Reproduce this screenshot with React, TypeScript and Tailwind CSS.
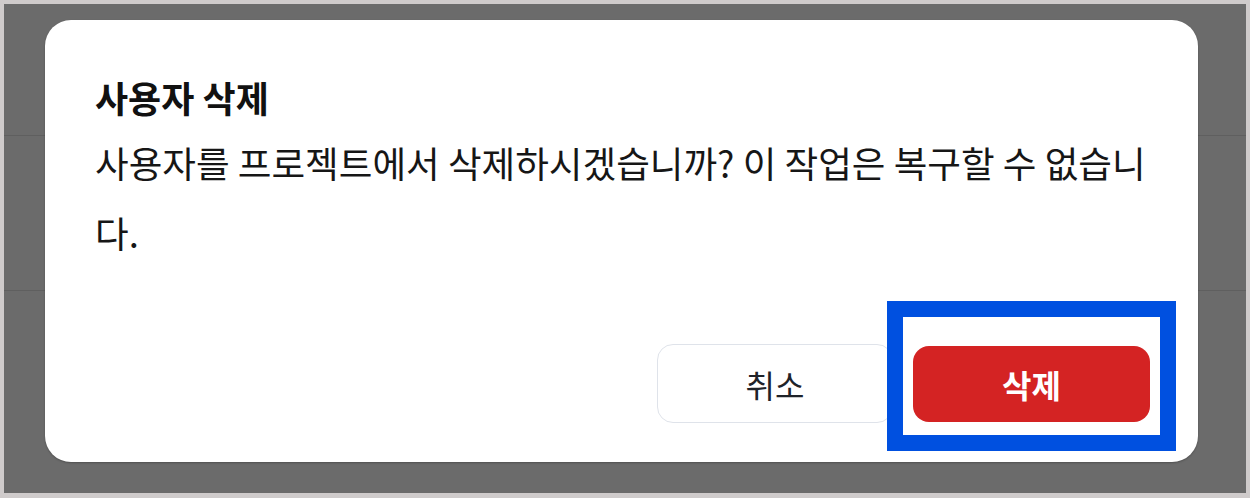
const font = { fontFamily: '"Noto Sans CJK KR", "Noto Sans", sans-serif' };

function BackgroundRows() {
  return (
    <div className="flex flex-col h-full">
      <div className="h-[132px] border-b border-[#5f5f5f]" />
      <div className="h-[155px] border-b border-[#5f5f5f]" />
      <div className="flex-1" />
    </div>
  );
}

export default function App() {
  return (
    <div className="w-[1250px] h-[498px] bg-[#cfcbcb] pt-[4px] pl-[4px] pr-[4px] pb-[5px]" style={font}>
      <div className="relative w-full h-full bg-[#6b6b6b] overflow-hidden">
        <BackgroundRows />

        {/* Modal dialog */}
        <div className="absolute left-[41px] top-[16px] w-[1153px] h-[442px] bg-white rounded-[26px] shadow-[0_1px_2px_rgba(0,0,0,0.25)] pl-[50px] pr-[50px] pt-[55px]">
          <h2 className="text-[36px] leading-[44px] font-bold text-[#111111]">사용자 삭제</h2>
          <p className="mt-[9px] text-[36.6px] leading-[70px] text-[#161616]">
            사용자를 프로젝트에서 삭제하시겠습니까? 이 작업은 복구할 수 없습니다.
          </p>

          <div className="mt-[76px] flex justify-end items-center gap-[20px] mr-[-2px]">
            <button className="w-[236px] h-[79px] rounded-[16px] border border-[#dfe3ea] bg-white text-[32px] text-[#1f2329]">
              취소
            </button>
            <div className="relative">
              <button className="w-[237px] h-[76px] rounded-[16px] bg-[#d42323] text-[32px] font-bold text-white">
                삭제
              </button>
              {/* highlight annotation */}
              <div className="absolute left-[-26px] top-[-45px] w-[289px] h-[150px] border-[16px] border-[#0050e0] pointer-events-none" />
            </div>
          </div>
        </div>
      </div>
    </div>
  );
}
